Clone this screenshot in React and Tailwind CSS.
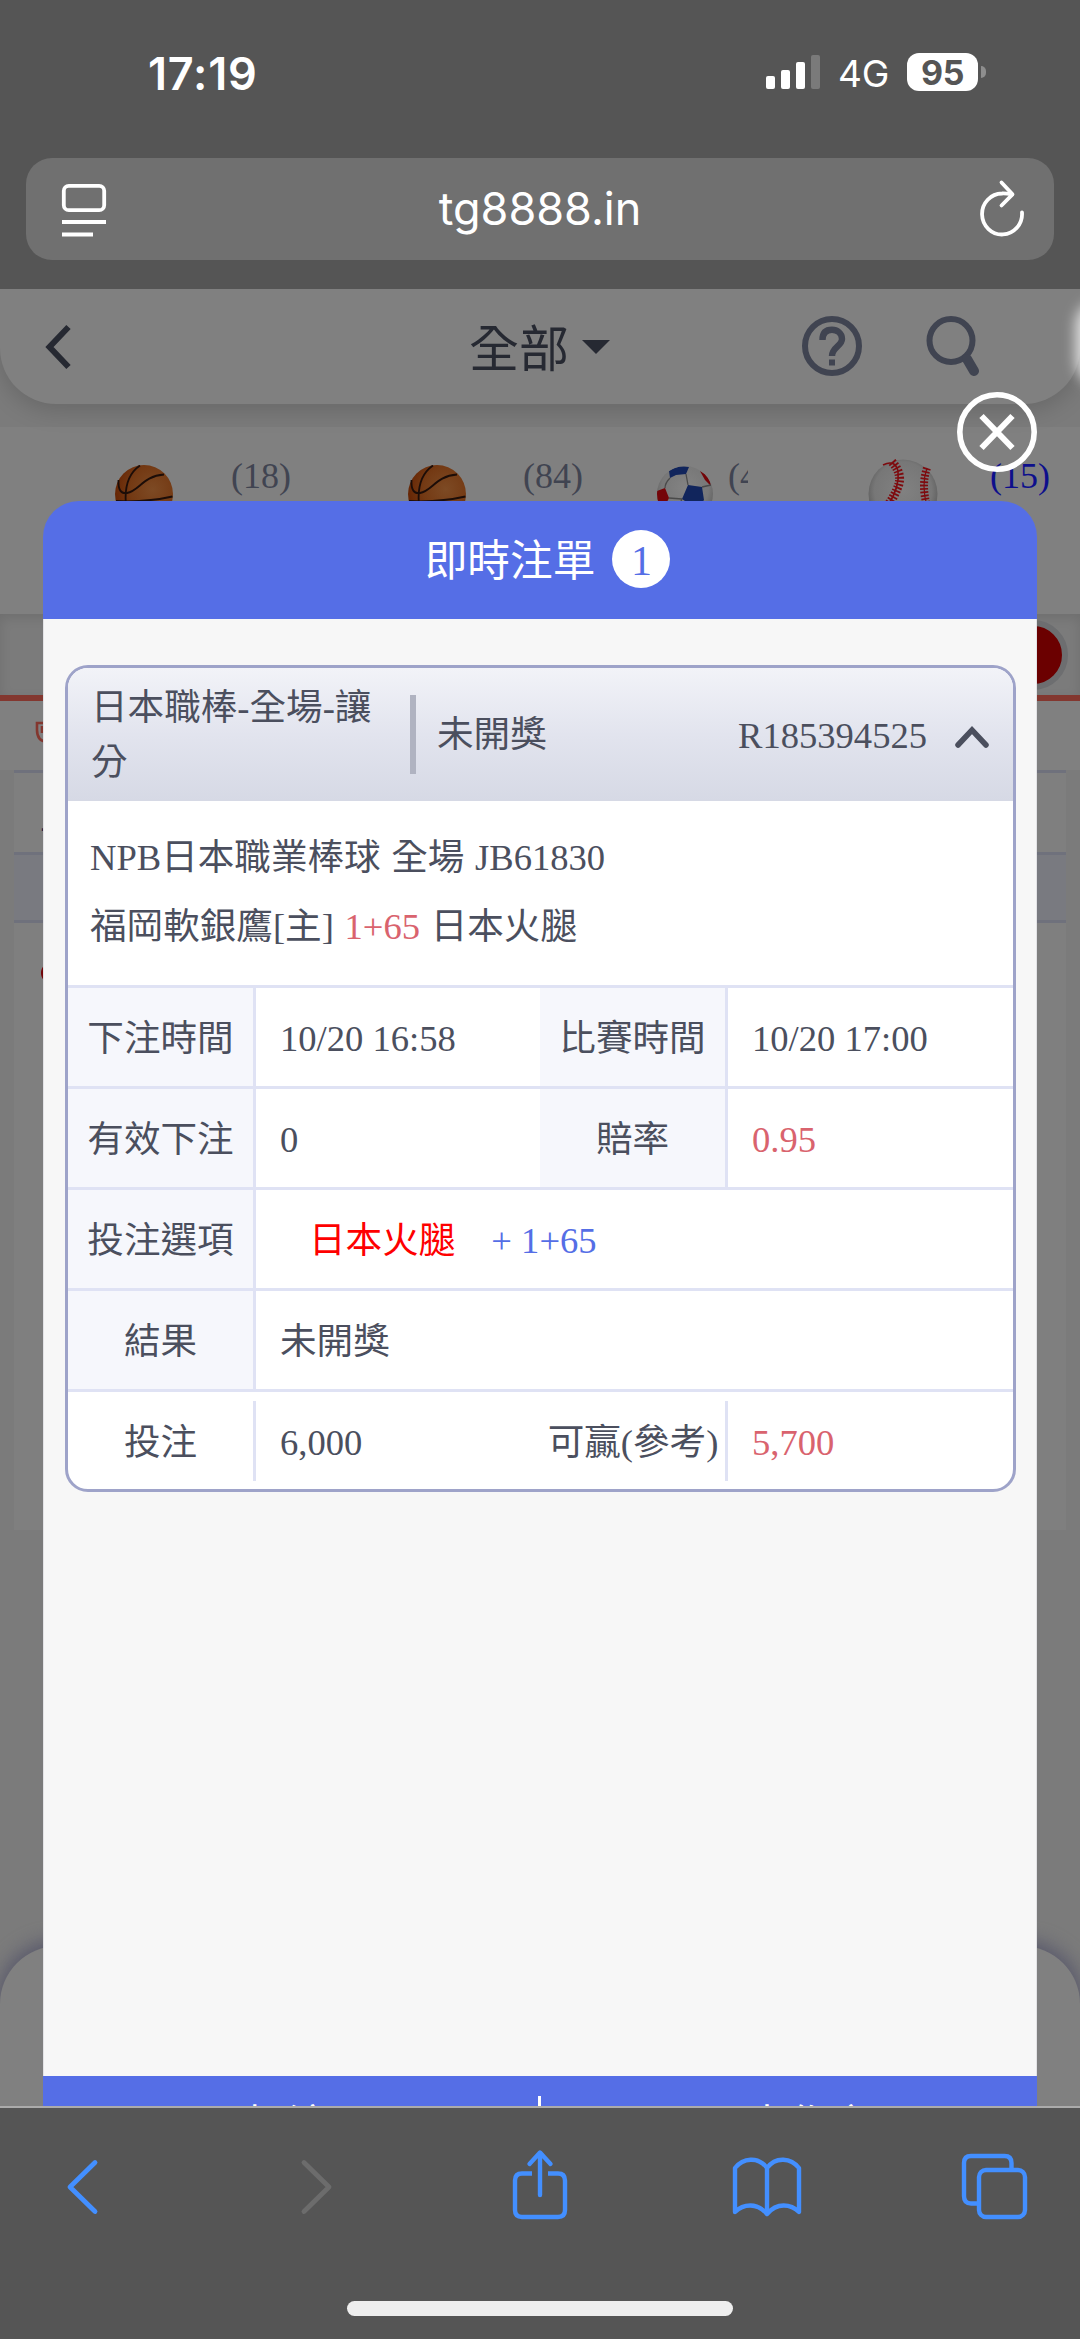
import clsx from "clsx";

const bet = {
  type: "日本職棒-全場-讓分",
  status: "未開獎",
  orderNo: "R185394525",
  league: "NPB日本職業棒球 全場 JB61830",
  home: "福岡軟銀鷹[主]",
  odds: "1+65",
  away: "日本火腿",
};

const StatusBar = () => (
  <div className="flex h-[158px] justify-between pt-[47px] pr-[94px] pl-[148px] font-['Inter',sans-serif] text-white">
    <span className="text-[45px] leading-[54px] font-semibold tracking-[0.8px]">17:19</span>
    <div className="flex h-[50px] items-center">
      <svg className="h-[36px] w-[56px]" viewBox="0 0 56 36" fill="#fff">
        <rect x="1" y="22" width="9" height="13" rx="2" />
        <rect x="16" y="16" width="9" height="19" rx="2" />
        <rect x="31" y="8" width="9" height="27" rx="2" />
        <rect x="46" y="1" width="9" height="34" rx="2" fill="#7a7a7a" />
      </svg>
      <span className="mt-[3px] ml-[17px] text-[37px] leading-[50px] tracking-[-0.3px]">4G</span>
      <div className="ml-[18px] flex h-[38px] w-[71px] items-center justify-center rounded-[12px] bg-white pt-[2px] text-[34px] leading-none font-bold tracking-[-0.5px] text-[#555]">
        95
      </div>
      <div className="ml-[3px] h-[12px] w-[5px] rounded-r-full bg-[#8e8e8e]"></div>
    </div>
  </div>
);

const UrlBar = () => (
  <div className="h-[131px] px-[26px]">
    <div className="flex h-[102px] items-center justify-between rounded-[26px] bg-[#707070] pr-[29px] pl-[35px]">
      <svg className="mt-[2px] h-[56px] w-[46px]" viewBox="0 0 46 56" fill="none" stroke="#fff" strokeWidth="3.8">
        <rect x="2.8" y="3.8" width="40.4" height="24.4" rx="5" />
        <path d="M1 40h44M1 52.5h31" />
      </svg>
      <span className="mr-[6px] font-['Inter',sans-serif] text-[45px] leading-[54px] text-white">tg8888.in</span>
      <svg className="-mt-[4px] h-[62px] w-[46px]" viewBox="0 0 46 62" fill="none" stroke="#fff" strokeWidth="3.8" strokeLinecap="round" strokeLinejoin="round">
        <path d="M43 36.5A20 20.5 0 1 1 23 17.5Q27 17.3 33 18.5" />
        <path d="M22.5 6.5L33.5 18.3L22.5 29.5" />
      </svg>
    </div>
  </div>
);

const PageHeader = () => (
  <div className="relative z-10 flex h-[115px] items-center rounded-b-[56px] bg-[#808080] shadow-[0_6px_24px_rgba(0,0,0,0.16)]">
    <svg className="ml-[45px] h-[46px] w-[28px]" viewBox="0 0 28 46" fill="none" stroke="#262932" strokeWidth="6">
      <path d="M23.5 3L4.5 23L23.5 43" />
    </svg>
    <div className="ml-[396px] flex items-center">
      <span className="-mt-[4px] font-['Noto_Sans_CJK_TC',sans-serif] text-[50px] leading-[60px] text-[#262932]">全部</span>
      <svg className="ml-[13px] h-[14px] w-[28px]" viewBox="0 0 28 14" fill="#262932">
        <path d="M0 0h28L14 14z" />
      </svg>
    </div>
    <svg className="-mt-[2px] ml-[191px] h-[62px] w-[62px]" viewBox="0 0 62 62" fill="none" stroke="#404451" strokeWidth="6">
      <circle cx="31" cy="31" r="27" />
      <path d="M21.5 25C21.5 17 26 14.8 31 14.8S41 18 41 24C41 31 31 32 31 41" strokeWidth="6.4" />
      <path d="M31 44.5v6" />
    </svg>
    <svg className="-mt-[2px] ml-[63px] h-[62px] w-[54px]" viewBox="0 0 54 62" fill="none" stroke="#404451" strokeWidth="6">
      <circle cx="25" cy="25.5" r="21.5" />
      <path d="M41 44L48 56" strokeWidth="10" strokeLinecap="round" />
    </svg>
  </div>
);

const Basketball = () => (
  <svg className="h-[58px] w-[58px]" viewBox="0 0 58 58">
    <defs>
      <radialGradient id="basket" cx="0.65" cy="0.42" r="0.65">
        <stop offset="0" stopColor="#7d4a24" />
        <stop offset="0.6" stopColor="#743a14" />
        <stop offset="1" stopColor="#662605" />
      </radialGradient>
    </defs>
    <circle cx="29" cy="29" r="29" fill="url(#basket)" />
    <g fill="none" stroke="#1c0d08" strokeWidth="1.8">
      <path d="M25 0.5C14 8 9 20 11 40" />
      <path d="M3.5 15C3 25 6 29 12 28C24 26 28 11 49 9.5" />
      <path d="M1 36C22 37 42 35 57.5 31.5" />
    </g>
  </svg>
);

const SoccerBall = () => (
  <svg className="h-[56px] w-[56px]" viewBox="0 0 56 56">
    <defs>
      <clipPath id="soccer">
        <circle cx="28" cy="28" r="28" />
      </clipPath>
      <radialGradient id="leather" cx="0.5" cy="0.4" r="0.6">
        <stop offset="0" stopColor="#838383" />
        <stop offset="0.7" stopColor="#787878" />
        <stop offset="1" stopColor="#5c5c5c" />
      </radialGradient>
    </defs>
    <g clipPath="url(#soccer)">
      <path fill="url(#leather)" d="M0 0h56v56H0z" />
      <path fill="#11255c" d="M12 5Q20 -1 32 1L29 8L19 9L13 12zM31 19L45 21L47 34L40 43L25 33z" />
      <path fill="#740509" d="M0 25L8 22L12 32L8 40L0 40zM43 5Q53 10 54 20L48 14z" />
      <path fill="none" stroke="#4a4a4a" strokeWidth="1.3" d="M13 12Q8 17 8 22M29 8L31 19M25 33L12 32M45 21L54 19M25 33L20 44" />
    </g>
  </svg>
);

const Baseball = () => (
  <svg className="h-[70px] w-[70px]" viewBox="0 0 70 70">
    <defs>
      <radialGradient id="baseball" cx="0.5" cy="0.45" r="0.52">
        <stop offset="0" stopColor="#818181" />
        <stop offset="0.8" stopColor="#777" />
        <stop offset="1" stopColor="#626262" />
      </radialGradient>
    </defs>
    <circle cx="35" cy="35" r="34.5" fill="url(#baseball)" />
    <g fill="none" stroke="#7e0b0f">
      <path d="M15 6Q27 0 30 12Q32 28 20 46" strokeWidth="1.6" />
      <path d="M24 3Q36 16 29 30Q26 38 20 46" strokeWidth="9" strokeDasharray="1.7 1.7" />
      <path d="M59 9Q53 26 59 47" strokeWidth="8" strokeDasharray="1.7 1.7" />
      <path d="M59 9Q53 26 59 47" strokeWidth="1.2" />
    </g>
  </svg>
);

const SportTabs = () => (
  <div className="mt-[23px] h-[187px] bg-[#808080] text-[36px] leading-[40px] text-[#404451]">
    <div className="flex items-start pt-[33px]">
      <div className="ml-[115px] flex w-[293px] gap-[58px]">
        <div className="pt-[5px]"><Basketball /></div>
        <span className="-mt-[4px]">(18)</span>
      </div>
      <div className="flex w-[249px] gap-[57px]">
        <div className="pt-[5px]"><Basketball /></div>
        <span className="-mt-[4px]">(84)</span>
      </div>
      <div className="flex w-[211px] gap-[15px]">
        <div className="pt-[6px]"><SoccerBall /></div>
        <span className="-mt-[4px] w-[20px] overflow-hidden">(4</span>
      </div>
      <div className="flex gap-[52px]">
        <div className="-mt-[1px]"><Baseball /></div>
        <span className="-mt-[4px] text-[#0d0f8c]">(15)</span>
      </div>
    </div>
  </div>
);

/* Dimmed page under the bet slip */
const PageContent = () => (
  <div className="h-full bg-[#7b7b7b]">
    <PageHeader />
    <SportTabs />
    <div className="flex h-[87px] items-center justify-end border-b-[6px] border-[#83372f] pr-[12px] shadow-[inset_0_4px_12px_rgba(0,0,0,0.1)]">
      <div className="h-[70px] w-[70px] rounded-full border-[6px] border-[#6d6e70] bg-[#6b0000]"></div>
    </div>
    <div className="h-[69px] bg-[#808080] pt-[20px] pl-[35px]">
      <svg className="h-[24px] w-[24px]" viewBox="0 0 24 24" fill="none" stroke="#83372f" strokeWidth="2.6">
        <path d="M2 2h20v6Q22 21 12 21Q2 20 2 9zM7 5v7" />
      </svg>
    </div>
    <div className="mx-[14px] h-[760px] bg-[#7f7f7f]">
      <div className="h-[82px] border-t-[3px] border-[#6f717c] pt-[26px] pl-[26px] text-[36px] leading-[40px] text-[#262645]">
        工
      </div>
      <div className="h-[71px] border-y-[3px] border-[#6f717c] bg-[#797a80]"></div>
      <div className="pt-[39px] pl-[27px]">
        <div className="h-[22px] w-[22px] rounded-full bg-[#740509]"></div>
      </div>
    </div>
    <div className="mt-[416px] h-[200px] rounded-t-[58px] bg-[#808080] shadow-[0_-3px_18px_3px_#5a5a6c]"></div>
  </div>
);

const Label = ({ children, plain, className }) => (
  <div
    className={clsx(
      "flex shrink-0 items-center justify-center border-r-[3px] border-[#dfe2f4] whitespace-nowrap",
      plain ? "my-[9px]" : "bg-[#f6f7fc]",
      className
    )}
  >
    <span className="mt-[3px]">{children}</span>
  </div>
);

const Value = ({ children, className }) => (
  <div className={clsx("flex items-center pt-[3px] pl-[24px]", className)}>{children}</div>
);

const Row = ({ children }) => (
  <div className="flex h-[101px] border-t-[3px] border-[#dfe2f4]">{children}</div>
);

const BetCard = () => (
  <div className="mt-[46px] mr-[20px] ml-[21px] h-[827px] overflow-hidden rounded-[23px] border-[3px] border-[#9ea3c9] bg-white text-[36.6px] leading-[55px] text-[#4b4f5e]">
    <div className="flex h-[133px] items-center bg-gradient-to-b from-[#f2f3f8] via-[#e2e4ee] to-[#d6d9e5]">
      <div className="ml-[23px] h-[110px] w-[300px]">{bet.type}</div>
      <div className="ml-[19px] h-[79px] w-[6px] bg-[#b0b3c1]"></div>
      <div className="ml-[21px]">{bet.status}</div>
      <div className="mt-[2px] ml-auto">{bet.orderNo}</div>
      <svg className="mt-[5px] mr-[23px] ml-[27px] h-[24px] w-[36px]" viewBox="0 0 36 24" fill="none" stroke="#4b4f5e" strokeWidth="5.5" strokeLinecap="round">
        <path d="M4 20L18 5L32 20" />
      </svg>
    </div>
    <div className="h-[184px] pt-[22px] pl-[22px] leading-[69px] [word-spacing:1.5px]">
      <div>{bet.league}</div>
      <div>
        {bet.home} <span className="text-[#d9636e]">{bet.odds}</span> {bet.away}
      </div>
    </div>
    <Row>
      <Label className="w-[188px]">下注時間</Label>
      <Value className="w-[284px]">10/20 16:58</Value>
      <Label className="w-[188px]">比賽時間</Label>
      <Value>10/20 17:00</Value>
    </Row>
    <Row>
      <Label className="w-[188px]">有效下注</Label>
      <Value className="w-[284px]">0</Value>
      <Label className="w-[188px]">賠率</Label>
      <Value className="text-[#d9636e]">0.95</Value>
    </Row>
    <Row>
      <Label className="w-[188px]">投注選項</Label>
      <Value>
        <span className="ml-[29px] text-[#fe0000]">{bet.away}</span>
        <span className="ml-[36px] text-[#556ee6]">+ {bet.odds}</span>
      </Value>
    </Row>
    <Row>
      <Label className="w-[188px]">結果</Label>
      <Value>{bet.status}</Value>
    </Row>
    <Row>
      <Label plain className="w-[188px]">投注</Label>
      <Value className="w-[285px]">6,000</Value>
      <Label plain className="w-[187px]">可贏(參考)</Label>
      <Value className="text-[#d9636e]">5,700</Value>
    </Row>
  </div>
);

const BetSlipModal = () => (
  <div className="absolute top-[212px] left-[43px] z-20 w-[994px]">
    <div className="flex h-[118px] items-center justify-center rounded-t-[36px] bg-[#556ee6] pl-[15px] text-[42.7px] text-white">
      <span className="mt-[4px]">即時注單</span>
      <span className="-mt-[2px] ml-[17px] flex h-[58px] w-[58px] items-center justify-center rounded-full bg-white pt-[4px] text-[42px] text-[#556ee6]">
        1
      </span>
    </div>
    <div className="h-[1457px] overflow-hidden border-x border-[#e3e3e6] bg-[#f7f7f7]">
      <BetCard />
    </div>
    <div className="flex h-[140px] bg-[#556ee6] pt-[20px] text-[42px] leading-[56px] text-white">
      <div className="w-[498px] border-r-[3px] border-white pt-[2px] pr-[6px] text-center">投注</div>
      <div className="w-[496px] pt-[2px] pl-[40px] text-center">未作廢</div>
    </div>
    <button className="absolute -top-[109px] right-0 h-[80px] w-[80px]">
      <svg viewBox="0 0 80 80" fill="none" stroke="#fff" strokeWidth="5.6">
        <circle cx="40" cy="40" r="37.2" />
        <path d="M24.5 24L55.5 56M55.5 24L24.5 56" strokeWidth="6" />
      </svg>
    </button>
  </div>
);

const BottomBar = () => (
  <div className="h-[233px] border-t-2 border-[#ababab] bg-[#555]">
    <div className="flex h-[160px] items-start justify-between pt-[40px] pr-[52px] pl-[65px]">
      <svg className="mt-[11px] h-[56px] w-[36px]" viewBox="0 0 36 56" fill="none" stroke="#438fff" strokeWidth="4.8" strokeLinecap="round" strokeLinejoin="round">
        <path d="M30 3.5L5 28L30 52.5" />
      </svg>
      <svg className="mt-[11px] ml-[146px] h-[56px] w-[36px]" viewBox="0 0 36 56" fill="none" stroke="#6c6c6c" strokeWidth="4.8" strokeLinecap="round" strokeLinejoin="round">
        <path d="M5 3.5L30 28L5 52.5" />
      </svg>
      <svg className="ml-[124px] h-[74px] w-[60px]" viewBox="0 0 60 74" fill="none" stroke="#438fff" strokeWidth="4.4">
        <path d="M22 25.5H12Q5 25.5 5 32.5V62Q5 69 12 69H48Q55 69 55 62V32.5Q55 25.5 48 25.5H38" />
        <path d="M30 47V5M19.5 16L30 4.5L40.5 16" strokeLinecap="round" strokeLinejoin="round" />
      </svg>
      <svg className="mt-[7px] ml-[109px] h-[64px] w-[72px]" viewBox="0 0 72 64" fill="none" stroke="#438fff" strokeWidth="4.4" strokeLinejoin="round">
        <path d="M36 13C27 1 12 3 4 13V57C12 49 26 47 36 59C46 47 60 49 68 57V13C60 3 45 1 36 13V59" />
      </svg>
      <svg className="mt-[4px] ml-[106px] h-[68px] w-[68px]" viewBox="0 0 68 68" fill="none" stroke="#438fff" strokeWidth="4.4">
        <path d="M51.5 16V11Q51.5 4 44.5 4H11Q4 4 4 11V44Q4 51.5 11 51.5H18" />
        <rect x="19" y="18" width="46" height="47" rx="7" />
      </svg>
    </div>
    <div className="mx-auto mt-[33px] h-[15px] w-[386px] rounded-full bg-[#eee]"></div>
  </div>
);

export default function App() {
  return (
    <div className="h-[2339px] w-[1080px] overflow-hidden bg-[#555] font-['Liberation_Serif','Noto_Sans_CJK_TC',serif]">
      <StatusBar />
      <UrlBar />
      <div className="relative h-[1817px] overflow-hidden">
        <PageContent />
        <BetSlipModal />
        {/* floating handle peeking in from the right edge */}
        <div className="absolute top-[16px] -right-[40px] z-20 h-[76px] w-[40px] rounded-full shadow-[0_0_14px_4px_rgba(255,255,255,0.8)]"></div>
      </div>
      <BottomBar />
    </div>
  );
}
